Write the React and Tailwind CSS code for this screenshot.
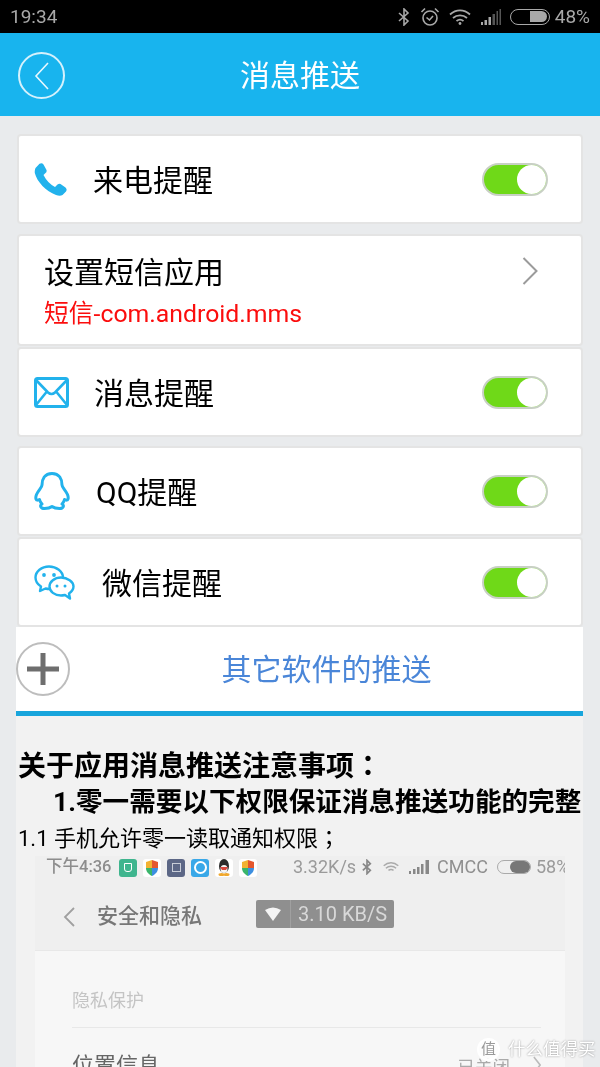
import React from "react";

const Toggle = () => (
  <div className="w-[66px] h-[33px] rounded-full bg-[#6fd918] border-2 border-[#c8d0c4] flex items-center justify-end shrink-0">
    <div className="w-[29px] h-[29px] rounded-full bg-white" />
  </div>
);

const Phone = () => (
  <svg width="33" height="33" viewBox="0 0 33 33" className="shrink-0">
    <path fill="#22b2ec" d="M1.500 5 L5.500 0.800 Q8 -0.500 9.500 1.500 L12.500 7 Q13 9 11.500 10 L9.500 12 Q13.500 20 21 24 L23.500 21.500 Q25 20.500 26.500 21 L31.500 24.500 Q33.500 26.500 32 28.500 L28.500 32 Q26 33.500 22 32 C12 28 3 19 0.800 10 Q0.500 7 1.500 5 Z" />
  </svg>
);

const Mail = () => (
  <svg width="35" height="31" viewBox="0 0 35 31" className="shrink-0" fill="none">
    <rect x="1.500" y="1.500" width="32" height="28" rx="2" stroke="#22b2ec" strokeWidth="3" fill="#fff" />
    <path d="M2 3 L14 15.500 Q17.500 18.500 21 15.500 L33 3 M2 28 L12.500 15 M33 28 L22.500 15" stroke="#22b2ec" strokeWidth="2.600" />
  </svg>
);

const QQ = () => (
  <svg width="36" height="38" viewBox="0 0 36 38" className="shrink-0" fill="none">
    <path stroke="#22b2ec" strokeWidth="3" strokeLinejoin="round" d="M18 1.500 C10.500 1.500 8 7.500 8 13 C8 15.500 4.500 18 2.500 22.500 C1 26.500 2 29.500 5.500 27.500 C6 29.500 7 31 8 32 C5.500 33.500 6.500 36.500 10.500 36.500 C13.500 36.500 16 36 18 34.500 C20 36 22.500 36.500 25.500 36.500 C29.500 36.500 30.500 33.500 28 32 C29 31 30 29.500 30.500 27.500 C34 29.500 35 26.500 33.500 22.500 C31.500 18 28 15.500 28 13 C28 7.500 25.500 1.500 18 1.500 Z" />
  </svg>
);

const WeChat = () => (
  <svg width="41" height="35" viewBox="0 0 41 35" className="shrink-0" fill="none">
    <path stroke="#22b2ec" strokeWidth="2.400" fill="#fff" strokeLinejoin="round" d="M15 1.500 C7.500 1.500 1.500 6.500 1.500 12.500 C1.500 16.500 3.800 19.500 7 21.500 L6 26 L11.500 23.500 C13 24 14.500 24 16 24 C23 24 29 19 29 12.500 C29 6.500 22.500 1.500 15 1.500 Z" />
    <path stroke="#22b2ec" strokeWidth="2.400" fill="#fff" strokeLinejoin="round" d="M27 12.500 C20.500 12.500 15.500 16.800 15.500 21.500 C15.500 26.500 20.500 30.500 27 30.500 C28.500 30.500 30 30.200 31 30 L36 33.500 L35 28.500 C37.800 26.500 39.500 24.200 39.500 21.500 C39.500 16.800 33.500 12.500 27 12.500 Z" />
    <circle cx="10" cy="10" r="1.900" fill="#22b2ec" /><circle cx="20" cy="10" r="1.900" fill="#22b2ec" />
    <circle cx="23" cy="21" r="1.500" fill="#22b2ec" /><circle cx="31" cy="21" r="1.500" fill="#22b2ec" />
  </svg>
);

const Row = ({ icon, label, gap, mt }) => (
  <div className={`h-[90px] ${mt} bg-white border-2 border-[#e4e4e4] rounded-[4px] flex items-center pl-[15px] pr-[33px]`}>
    <div className="w-[59px] flex shrink-0">{icon}</div>
    <span className={`text-[30px] leading-none text-black mt-[3px] ${gap}`}>{label}</span>
    <div className="ml-auto"><Toggle /></div>
  </div>
);

const SmallIcon = ({ bg, children }) => (
  <div className={`w-[18px] h-[18px] rounded-[3px] flex items-center justify-center shrink-0 ${bg}`}>{children}</div>
);

const Shield = () => (
  <svg width="14" height="16" viewBox="0 0 14 16">
    <path fill="#f2b233" d="M7 0 L1 2 V8 H7 Z" /><path fill="#e4572e" d="M7 0 L13 2 V8 H7 Z" />
    <path fill="#3ab56b" d="M1 8 C1 12 4 14.500 7 16 V8 Z" /><path fill="#3d8fe0" d="M13 8 C13 12 10 14.500 7 16 V8 Z" />
  </svg>
);

export default function App() {
  return (
    <div className="w-[600px] h-[1067px] overflow-hidden bg-[#e9ebed] font-['Roboto','Noto_Sans_CJK_SC',sans-serif] relative blur-[0.35px]">
      <div className="h-[33px] bg-black flex items-center pl-[10px] pr-[10px] text-[#a8a8a8]">
        <span className="text-[19px] leading-none">19:34</span>
        <div className="ml-auto flex items-center">
          <svg width="12" height="18" viewBox="0 0 12 18" fill="none" stroke="#a8a8a8" strokeWidth="1.600"><path d="M1 5 L10 13 L6 17 V1 L10 5 L1 13" /></svg>
          <svg width="20" height="20" viewBox="0 0 20 20" fill="none" stroke="#a8a8a8" strokeWidth="1.600" className="ml-[10px]"><circle cx="10" cy="11" r="7" /><path d="M6.500 10.500 L9.500 13 L13 9 M1.500 5 L5 1.500 M18.500 5 L15 1.500" /></svg>
          <svg width="22" height="16" viewBox="0 0 22 16" fill="none" stroke="#a8a8a8" strokeWidth="1.800" className="ml-[9px]"><path d="M1 5.500 C7 0 15 0 21 5.500 M4 9 C8 5.500 14 5.500 18 9 M7.500 12 C9.500 10.500 12.500 10.500 14.500 12" /><circle cx="11" cy="14.500" r="1.400" fill="#a8a8a8" stroke="none" /></svg>
          <svg width="20" height="16" viewBox="0 0 20 16" className="ml-[10px]"><path fill="#a8a8a8" d="M0 13h2v3H0zM3.500 11h2.500v5H3.500zM7.500 8h2.500v8H7.500z" /><path fill="#555" d="M11.500 5h2.500v11h-2.500zM15.500 2h1.500v14h-1.500zM18.500 0h1.500v16h-1.500z" /></svg>
          <div className="ml-[9px] w-[40px] h-[16px] border-[1.5px] border-[#a8a8a8] rounded-full flex justify-end p-[1.5px]"><div className="w-[17px] h-full bg-[#a8a8a8] rounded-r-full" /></div>
          <span className="text-[19px] leading-none ml-[5px]">48%</span>
        </div>
      </div>

      <div className="h-[83px] bg-[#18b4ee] relative flex items-center justify-center">
        <div className="absolute left-[18px] top-[19px] w-[47px] h-[47px] rounded-full border-2 border-[#d5f1fc] flex items-center justify-center">
          <svg width="16" height="28" viewBox="0 0 16 28" fill="none" stroke="#e8f8fe" strokeWidth="1.600"><path d="M14 1 L2 14 L14 27" /></svg>
        </div>
        <span className="text-[30px] leading-none text-white mt-[2px]">消息推送</span>
      </div>

      <div className="px-[17px] pt-[18px]">
        <Row icon={<Phone />} label="来电提醒" gap="" mt="" />

        <div className="mt-[10px] h-[112px] bg-white border-2 border-[#e4e4e4] rounded-[4px] flex items-center pl-[25px] pr-[43px]">
          <div className="flex flex-col">
            <span className="text-[30px] leading-none text-black mt-[5px]">设置短信应用</span>
            <span className="text-[24.8px] leading-none text-[#fb0d0d] mt-[14px]">短信-com.android.mms</span>
          </div>
          <svg width="16" height="28" viewBox="0 0 16 28" fill="none" stroke="#9b9b9b" strokeWidth="2" className="ml-auto mb-[38px]"><path d="M1.500 1 L14.500 14 L1.500 27" /></svg>
        </div>

        <Row icon={<Mail />} label="消息提醒" gap="ml-[1px]" mt="mt-[1px]" />
        <Row icon={<QQ />} label="QQ提醒" gap="ml-[3px]" mt="mt-[9px]" />
        <Row icon={<WeChat />} label="微信提醒" gap="ml-[9px]" mt="mt-[1px]" />
      </div>

      <div className="ml-[16px] mr-[17px] bg-[#f2f2f2]">
        <div className="h-[84px] bg-white relative flex items-center justify-center">
          <div className="absolute left-0 top-[15px] w-[54px] h-[54px] rounded-full border-2 border-[#bdbdbd] bg-white flex items-center justify-center">
            <svg width="32" height="32" viewBox="0 0 32 32" fill="#6e6e6e"><rect x="13.500" y="0" width="5" height="32" /><rect x="0" y="13.500" width="32" height="5" /></svg>
          </div>
          <span className="text-[30px] leading-none text-[#4a86d8] ml-[54px] mt-[2px]">其它软件的推送</span>
        </div>
        <div className="h-[5px] bg-[#18a5dc]" />
        <div className="pt-[31px] text-black">
          <div className="text-[28px] leading-[35px] font-bold ml-[2px] whitespace-nowrap">关于应用消息推送注意事项<span className="font-['Noto_Sans_CJK_TC']">：</span></div>
          <div className="text-[26.6px] leading-[35px] font-bold ml-[37px] whitespace-nowrap">1.零一需要以下权限保证消息推送功能的完整</div>
          <div className="text-[22px] leading-[34px] ml-[2px] whitespace-nowrap">1.1 手机允许零一读取通知权限<span className="font-['Noto_Sans_CJK_TC']">；</span></div>

          <div className="ml-[19px] w-[530px] h-[300px] bg-[#f7f7f7] text-[#8a8a8a] blur-[0.6px]">
            <div className="h-[94px] bg-[#efefef] relative">
              <div className="h-[22px] flex items-center pl-[11px] pt-[1px]">
                <span className="text-[16.5px] leading-none whitespace-nowrap font-medium text-[#8d8d8d] w-[73px] shrink-0">下午4:36</span>
                <div className="flex gap-[6px]">
                  <SmallIcon bg="bg-[#3fb58e]"><div className="w-[8px] h-[9px] border border-white rounded-b-[3px]" /></SmallIcon>
                  <SmallIcon bg="bg-white"><Shield /></SmallIcon>
                  <SmallIcon bg="bg-[#5c6786]"><div className="w-[9px] h-[9px] border border-[#c8cdd8]" /></SmallIcon>
                  <SmallIcon bg="bg-[#39a8e8]"><div className="w-[13px] h-[13px] rounded-full border-2 border-white" /></SmallIcon>
                  <SmallIcon bg="bg-white">
                    <svg width="14" height="17" viewBox="0 0 14 17"><ellipse cx="7" cy="7" rx="5" ry="7" fill="#2b2b2b" /><ellipse cx="7" cy="10" rx="3.500" ry="4" fill="#f5f5f5" /><path d="M3 8 H11 L9 11 H5 Z" fill="#d9463c" /><ellipse cx="4.500" cy="15.500" rx="3" ry="1.500" fill="#f0a82e" /><ellipse cx="9.500" cy="15.500" rx="3" ry="1.500" fill="#f0a82e" /></svg>
                  </SmallIcon>
                  <SmallIcon bg="bg-white"><Shield /></SmallIcon>
                </div>
                <div className="absolute left-[258px] top-0 h-[22px] right-0 overflow-hidden flex items-center text-[18px] leading-none text-[#9a9a9a] whitespace-nowrap">
                  <span className="w-[69px] shrink-0">3.32K/s</span>
                  <svg width="10" height="16" viewBox="0 0 12 18" fill="none" stroke="#888" strokeWidth="2" className="shrink-0"><path d="M1 5 L10 13 L6 17 V1 L10 5 L1 13" /></svg>
                  <svg width="16" height="13" viewBox="0 0 22 16" fill="none" stroke="#aaa" strokeWidth="2" className="ml-[11px] shrink-0"><path d="M1 5.500 C7 0 15 0 21 5.500 M4 9 C8 5.500 14 5.500 18 9 M7.500 12 C9.500 10.500 12.500 10.500 14.500 12" /></svg>
                  <svg width="20" height="14" viewBox="0 0 20 14" fill="#888" className="ml-[10px] shrink-0"><path d="M0 11h2v3H0zM4 9h2.500v5H4zM8 7h2.500v7H8zM12 4h2.500v10H12zM16.500 0H20v14h-3.500z" /></svg>
                  <span className="ml-[8px] w-[53px] shrink-0 text-[#8f8f8f]">CMCC</span>
                  <div className="ml-[7px] w-[34px] h-[14px] border border-[#aaa] rounded-full flex justify-end shrink-0"><div className="w-[20px] h-full bg-[#777] rounded-full" /></div>
                  <span className="ml-[5px] shrink-0">58%</span>
                </div>
              </div>
              <div className="absolute left-[28px] top-[50px] flex items-center">
                <svg width="12" height="20" viewBox="0 0 12 20" fill="none" stroke="#a0a0a0" strokeWidth="1.800"><path d="M11 1 L2 10 L11 19" /></svg>
                <span className="text-[21px] leading-none font-medium text-[#777] ml-[22px] whitespace-nowrap">安全和隐私</span>
              </div>
              <div className="absolute left-[221px] top-[44px] w-[138px] h-[28px] bg-[#8f8f8f] rounded-[2px] flex items-center">
                <div className="w-[35px] h-full border-r border-[#a0a0a0] flex items-center justify-center">
                  <svg width="16" height="14" viewBox="0 0 16 14"><path fill="#f5f5f5" d="M0 3 Q8 -2 16 3 L8 14 Z" /></svg>
                </div>
                <span className="text-[20px] leading-none text-[#d8d8d8] ml-[7px] whitespace-nowrap">3.10 KB/S</span>
              </div>
            </div>
            <div className="border-t border-[#e8e8e8] pl-[37px] pr-[24px]">
              <div className="h-[77px] border-b border-[#e8e8e8] flex items-end pb-[17px] text-[18px] leading-none text-[#c4c4c4]">隐私保护</div>
              <div className="pt-[27px] flex items-start text-[22px] leading-none text-[#666]">
                <span>位置信息</span>
                <span className="ml-auto text-[#aaa] text-[17.5px] mt-[4px]">已关闭</span>
                <svg width="8" height="20" viewBox="0 0 9 20" fill="none" stroke="#bbb" strokeWidth="1.800" className="ml-[23px]"><path d="M1 1 L8 10 L1 19" /></svg>
              </div>
            </div>
          </div>
        </div>
      </div>

      <div className="absolute left-[477px] top-[1038px] flex items-center">
        <div className="w-[23px] h-[23px] rounded-full border-2 border-white flex items-center justify-center text-[15px] leading-none bg-white/80 text-[#999]">值</div>
        <span className="ml-[8px] text-[17.5px] leading-none whitespace-nowrap text-white [text-shadow:0_0_2px_#8a8a8a]">什么值得买</span>
      </div>
    </div>
  );
}
